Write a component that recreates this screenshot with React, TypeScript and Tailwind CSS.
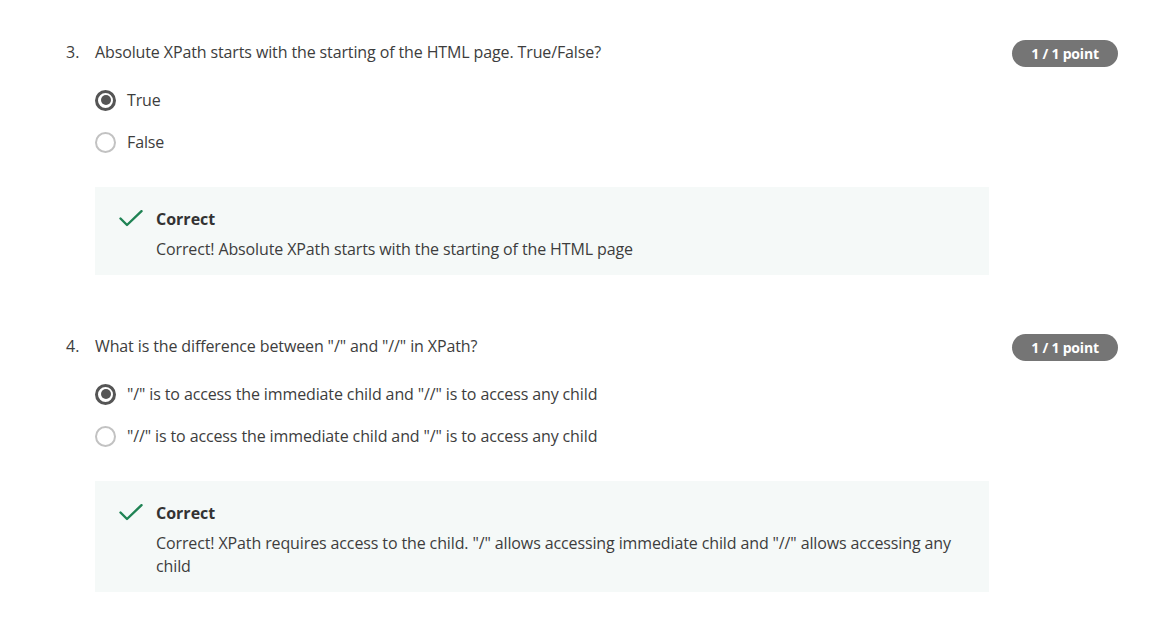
import React from "react";

type Q = {
  num: string;
  text: string;
  options: string[];
  selected: number;
  feedback: string;
};

const questions: Q[] = [
  {
    num: "3.",
    text: "Absolute XPath starts with the starting of the HTML page. True/False?",
    options: ["True", "False"],
    selected: 0,
    feedback: "Correct! Absolute XPath starts with the starting of the HTML page",
  },
  {
    num: "4.",
    text: 'What is the difference between "/" and "//" in XPath?',
    options: [
      '"/" is to access the immediate child and "//" is to access any child',
      '"//" is to access the immediate child and "/" is to access any child',
    ],
    selected: 0,
    feedback:
      'Correct! XPath requires access to the child. "/" allows accessing immediate child and "//" allows accessing any child',
  },
];

function Radio({ checked }: { checked: boolean }) {
  if (checked) {
    return (
      <span className="flex h-[21px] w-[21px] shrink-0 items-center justify-center rounded-full border-[3px] border-[#555555]">
        <span className="h-[10px] w-[10px] rounded-full bg-[#555555]" />
      </span>
    );
  }
  return <span className="h-[21px] w-[21px] shrink-0 rounded-full border-2 border-[#c2c2c2]" />;
}

function Check() {
  return (
    <svg width="24" height="17" viewBox="0 0 24 17" className="shrink-0">
      <path d="M1.5 8.5 L8 15 L22.5 1.2" fill="none" stroke="#1f8354" strokeWidth="2.4" strokeLinecap="round" strokeLinejoin="round" />
    </svg>
  );
}

function Question({ q, first }: { q: Q; first: boolean }) {
  return (
    <div className={first ? "" : "mt-[59px]"}>
      <div className="flex items-start">
        <div className="w-[29px] shrink-0 text-[16px] leading-[24px] text-[#3d3d3d]">{q.num}</div>
        <div className="flex-1 text-[16px] leading-[24px] tracking-[-0.12px] text-[#3d3d3d]">{q.text}</div>
        <div className="flex h-[27px] w-[106px] shrink-0 items-center justify-center rounded-full bg-[#757575] text-[14px] font-bold tracking-[-0.2px] text-white">
          1 / 1 point
        </div>
      </div>
      <div className="ml-[29px] mt-[21px] flex flex-col gap-[18px]">
        {q.options.map((o, i) => (
          <div key={i} className="flex h-[24px] items-center gap-[11px]">
            <Radio checked={i === q.selected} />
            <span className="text-[16px] leading-[24px] tracking-[-0.12px] text-[#3d3d3d]">{o}</span>
          </div>
        ))}
      </div>
      <div className="ml-[29px] mr-[129px] mt-[33px] flex bg-[#f5f9f8] pb-[14px] pl-[24px] pr-[20px] pt-[20px]">
        <div className="mt-[3px] w-[37px] shrink-0">
          <Check />
        </div>
        <div className="flex flex-col gap-[7px]">
          <div className="text-[16px] font-bold leading-[24px] text-[#333]">Correct</div>
          <div className="text-[16px] leading-[23px] tracking-[-0.12px] text-[#3d3d3d]">{q.feedback}</div>
        </div>
      </div>
    </div>
  );
}

export default function App() {
  return (
    <div
      className="min-h-[634px] w-[1174px] bg-white pl-[66px] pr-[56px] pt-[40px]"
      style={{ fontFamily: '"Open Sans", sans-serif' }}
    >
      {questions.map((q, i) => (
        <Question key={i} q={q} first={i === 0} />
      ))}
    </div>
  );
}
